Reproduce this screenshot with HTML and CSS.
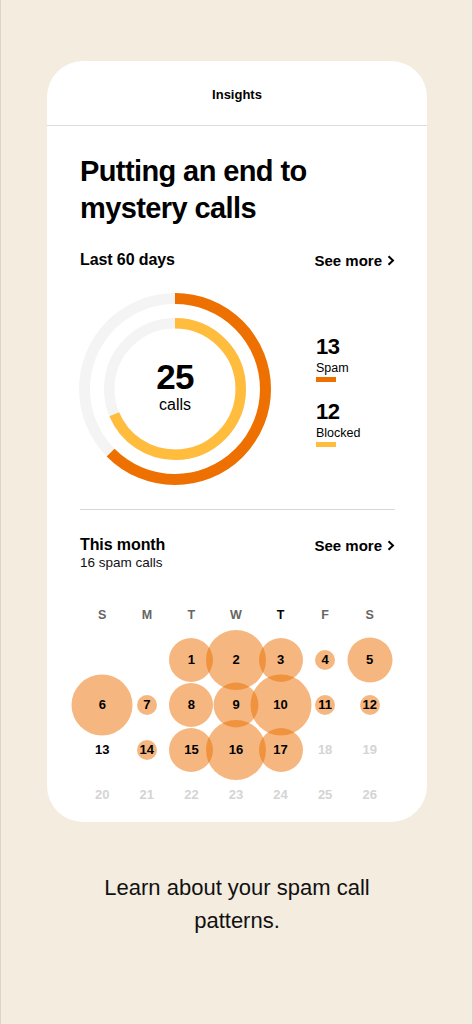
FILE: index.html
```html
<!DOCTYPE html>
<html lang="en">
<head>
<meta charset="utf-8">
<title>Insights</title>
<link rel="stylesheet" href="styles.css">
</head>
<body>
<main class="page">
  <section class="card">
    <header class="card-header">Insights</header>
    <div class="card-body">
      <h1 class="title">Putting an end to mystery calls</h1>

      <div class="section-head">
        <div class="section-title">Last 60 days</div>
        <a class="see-more">See more
          <svg class="chev" width="8" height="11" viewBox="0 0 8 11"><path d="M1.5 1.2 L6 5.5 L1.5 9.8" fill="none" stroke="#000" stroke-width="2"/></svg>
        </a>
      </div>

      <div class="chart-row">
        <div class="donut">
          <svg width="196" height="196" viewBox="0 0 196 196">
            <circle cx="98" cy="98" r="90.5" fill="none" stroke="#f4f4f4" stroke-width="11"/>
            <circle cx="98" cy="98" r="65.75" fill="none" stroke="#f4f4f4" stroke-width="10.5"/>
            <circle cx="98" cy="98" r="90.5" fill="none" stroke="#ed7000" stroke-width="11" stroke-dasharray="355.4 1000" transform="rotate(-90 98 98)"/>
            <circle cx="98" cy="98" r="65.75" fill="none" stroke="#ffbc3d" stroke-width="10.5" stroke-dasharray="283.5 1000" transform="rotate(-90 98 98)"/>
          </svg>
          <div class="donut-center">
            <div class="donut-num">25</div>
            <div class="donut-label">calls</div>
          </div>
        </div>
        <div class="legend">
          <div class="legend-num">13</div>
          <div class="legend-label">Spam</div>
          <div class="legend-bar bar-spam"></div>
          <div class="legend-num legend-num-2">12</div>
          <div class="legend-label">Blocked</div>
          <div class="legend-bar bar-blocked"></div>
        </div>
      </div>

      <hr class="divider">

      <div class="section-head month-head">
        <div>
          <div class="section-title">This month</div>
          <div class="section-sub">16 spam calls</div>
        </div>
        <a class="see-more">See more
          <svg class="chev" width="8" height="11" viewBox="0 0 8 11"><path d="M1.5 1.2 L6 5.5 L1.5 9.8" fill="none" stroke="#000" stroke-width="2"/></svg>
        </a>
      </div>

      <div class="calendar">
        <div class="dow">S</div>
        <div class="dow">M</div>
        <div class="dow">T</div>
        <div class="dow">W</div>
        <div class="dow today">T</div>
        <div class="dow">F</div>
        <div class="dow">S</div>

        <div class="day"></div>
        <div class="day"></div>
        <div class="day"><span class="bubble" style="width:44px;height:44px"></span><span class="num">1</span></div>
        <div class="day"><span class="bubble" style="width:60px;height:60px"></span><span class="num">2</span></div>
        <div class="day"><span class="bubble" style="width:44px;height:44px"></span><span class="num">3</span></div>
        <div class="day"><span class="bubble" style="width:20px;height:20px"></span><span class="num">4</span></div>
        <div class="day"><span class="bubble" style="width:45px;height:45px"></span><span class="num">5</span></div>

        <div class="day"><span class="bubble" style="width:61px;height:61px"></span><span class="num">6</span></div>
        <div class="day"><span class="bubble" style="width:20px;height:20px"></span><span class="num">7</span></div>
        <div class="day"><span class="bubble" style="width:44px;height:44px"></span><span class="num">8</span></div>
        <div class="day"><span class="bubble" style="width:45px;height:45px"></span><span class="num">9</span></div>
        <div class="day"><span class="bubble" style="width:61px;height:61px"></span><span class="num">10</span></div>
        <div class="day"><span class="bubble" style="width:20px;height:20px"></span><span class="num">11</span></div>
        <div class="day"><span class="bubble" style="width:20px;height:20px"></span><span class="num">12</span></div>

        <div class="day"><span class="num">13</span></div>
        <div class="day"><span class="bubble" style="width:20px;height:20px"></span><span class="num">14</span></div>
        <div class="day"><span class="bubble" style="width:44px;height:44px"></span><span class="num">15</span></div>
        <div class="day"><span class="bubble" style="width:60px;height:60px"></span><span class="num">16</span></div>
        <div class="day"><span class="bubble" style="width:44px;height:44px"></span><span class="num">17</span></div>
        <div class="day future"><span class="num">18</span></div>
        <div class="day future"><span class="num">19</span></div>

        <div class="day future"><span class="num">20</span></div>
        <div class="day future"><span class="num">21</span></div>
        <div class="day future"><span class="num">22</span></div>
        <div class="day future"><span class="num">23</span></div>
        <div class="day future"><span class="num">24</span></div>
        <div class="day future"><span class="num">25</span></div>
        <div class="day future"><span class="num">26</span></div>
      </div>
    </div>
  </section>

  <p class="caption">Learn about your spam call patterns.</p>
</main>
</body>
</html>
```

FILE: styles.css
```css
* { box-sizing: border-box; }

html, body {
  margin: 0;
  padding: 0;
}

body {
  background: #f3ecdf;
  font-family: "Liberation Sans", Arial, sans-serif;
  color: #000;
  min-height: 1024px;
  box-shadow: inset 1px 0 #d9d5cd, inset -1px 0 #d9d5cd;
}

.page {
  padding: 61px 46px 0 47px;
}

.card {
  background: #fff;
  border-radius: 36px;
  overflow: hidden;
}

.card-header {
  padding: 26px 0 22px;
  line-height: 16px;
  font-size: 13px;
  font-weight: 700;
  text-align: center;
  border-bottom: 1px solid #dcdcdc;
}

.card-body {
  padding: 0 32px 4.5px 33px;
}

.title {
  margin: 26.5px 0 0;
  font-size: 29px;
  line-height: 37px;
  font-weight: 700;
  letter-spacing: -0.6px;
}

.section-head {
  display: flex;
  justify-content: space-between;
  align-items: flex-start;
  margin-top: 23px;
}

.section-title {
  font-size: 16px;
  line-height: 20px;
  font-weight: 700;
  letter-spacing: -0.1px;
}

.section-sub {
  font-size: 13.5px;
  line-height: 16px;
  color: #111;
}

.see-more {
  display: flex;
  align-items: center;
  gap: 5px;
  padding-top: 2px;
  font-size: 15px;
  line-height: 18px;
  font-weight: 700;
  color: #000;
  text-decoration: none;
}

.chev { display: block; }

.chart-row {
  display: flex;
  margin-top: 21px;
}

.donut {
  position: relative;
  width: 196px;
  height: 196px;
  margin-left: -3px;
}

.donut svg { display: block; }

.donut-center {
  position: absolute;
  inset: 0;
  display: flex;
  flex-direction: column;
  align-items: center;
  justify-content: center;
  padding-bottom: 2px;
}

.donut-num {
  font-size: 35px;
  line-height: 34px;
  font-weight: 700;
  letter-spacing: -0.8px;
}

.donut-label {
  font-size: 16px;
  line-height: 20px;
  margin-top: 1px;
}

.legend {
  margin-left: 43px;
  padding-top: 42px;
}

.legend-num {
  font-size: 22px;
  line-height: 28px;
  font-weight: 700;
  letter-spacing: -0.5px;
}

.legend-num-2 { margin-top: 16px; }

.legend-label {
  font-size: 12.5px;
  line-height: 15px;
}

.legend-bar {
  width: 20px;
  height: 5px;
  margin-top: 1px;
}

.bar-spam { background: #ed7000; }
.bar-blocked { background: #ffbc3d; }

.divider {
  border: 0;
  border-top: 1px solid #d8d8d8;
  margin: 22px 0 0;
  height: 0;
}

.month-head { margin-top: 25px; }

.calendar {
  display: grid;
  grid-template-columns: repeat(7, 1fr);
  grid-auto-rows: 45px;
  width: 312px;
  margin-top: 21.5px;
}

.dow {
  display: flex;
  align-items: center;
  justify-content: center;
  font-size: 12.5px;
  font-weight: 700;
  color: #666;
}

.dow.today { color: #000; }

.day {
  position: relative;
  display: flex;
  align-items: center;
  justify-content: center;
}

.bubble {
  position: absolute;
  left: 50%;
  top: 50%;
  transform: translate(-50%, -50%);
  border-radius: 50%;
  background: rgba(236, 111, 0, 0.5);
}

.num {
  position: relative;
  font-size: 13px;
  font-weight: 700;
  color: #000;
}

.day.future .num { color: #d4d4d4; }

.caption {
  margin: 49.5px auto 0;
  max-width: 300px;
  text-align: center;
  font-size: 22px;
  line-height: 33px;
  color: #111;
}
```
